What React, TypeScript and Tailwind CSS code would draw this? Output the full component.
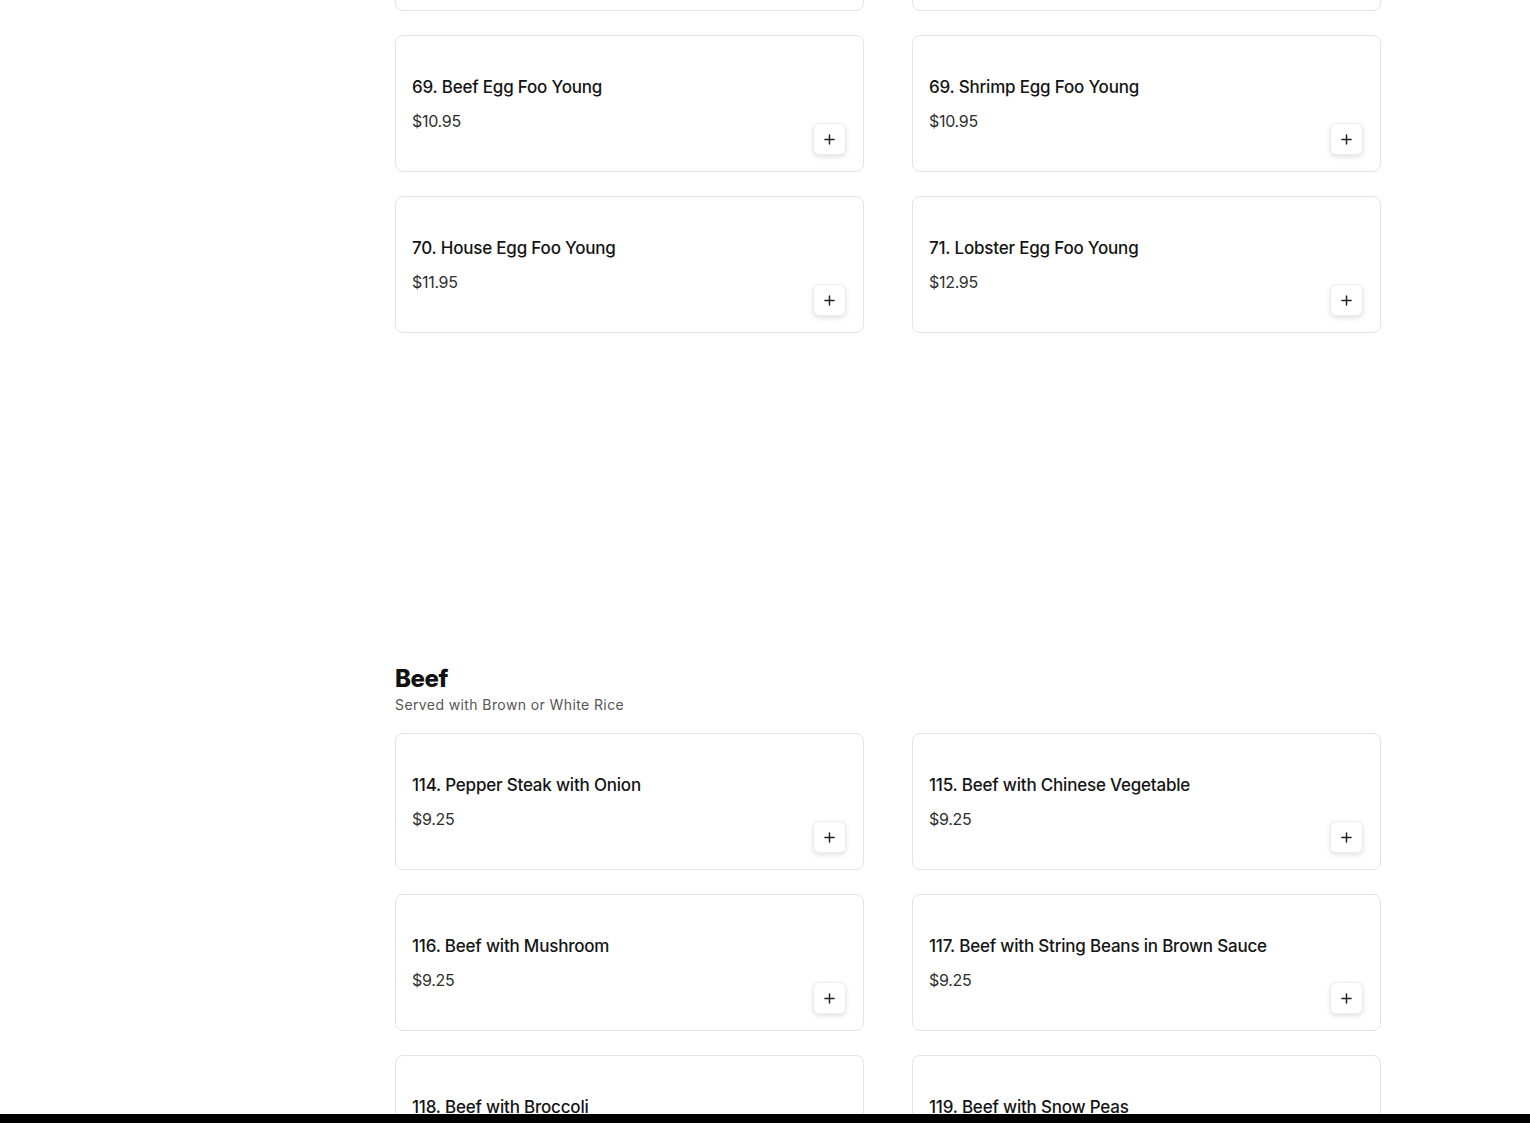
const eggFooYoung = [
  { name: '68. Chicken Egg Foo Young', price: '$10.95' },
  { name: '68. Pork Egg Foo Young', price: '$10.95' },
  { name: '69. Beef Egg Foo Young', price: '$10.95' },
  { name: '69. Shrimp Egg Foo Young', price: '$10.95' },
  { name: '70. House Egg Foo Young', price: '$11.95' },
  { name: '71. Lobster Egg Foo Young', price: '$12.95' },
];

const beef = [
  { name: '114. Pepper Steak with Onion', price: '$9.25' },
  { name: '115. Beef with Chinese Vegetable', price: '$9.25' },
  { name: '116. Beef with Mushroom', price: '$9.25' },
  { name: '117. Beef with String Beans in Brown Sauce', price: '$9.25' },
  { name: '118. Beef with Broccoli', price: '$9.25' },
  { name: '119. Beef with Snow Peas', price: '$9.25' },
];

interface Item {
  name: string;
  price: string;
}

function PlusIcon() {
  return (
    <svg width="11" height="11" viewBox="0 0 12 12" fill="none">
      <path d="M6 1v10M1 6h10" stroke="#1f1f1f" strokeWidth="1.6" strokeLinecap="round" />
    </svg>
  );
}

function ItemCard({ item }: { item: Item }) {
  return (
    <div className="flex h-[137px] justify-between rounded-lg border border-[#e4e4e4] bg-white pr-[17px] pb-4 pl-4">
      <div className="flex flex-col pt-[39px]">
        <div className="text-[17px] leading-6 font-medium tracking-[-0.2px] text-[#141414]">{item.name}</div>
        <div className="mt-2.5 text-[16px] leading-6 tracking-[-0.3px] text-[#2e2e2e]">{item.price}</div>
      </div>
      <button
        type="button"
        aria-label="Add"
        className="flex h-[32px] w-[33px] items-center justify-center self-end rounded-md border border-[#ececec] bg-white shadow-[0_2px_5px_rgba(0,0,0,0.12)]"
      >
        <PlusIcon />
      </button>
    </div>
  );
}

export default function App() {
  return (
    <div
      className="min-h-[1123px] overflow-hidden bg-white"
      style={{ fontFamily: 'Inter, "Noto Sans", sans-serif' }}
    >
      <div className="ml-[395px] w-[986px]">
        <div className="-mt-[126px] grid grid-cols-2 gap-x-12 gap-y-6">
          {eggFooYoung.map((item) => (
            <ItemCard key={item.name} item={item} />
          ))}
        </div>

        <section className="mt-[330px]">
          <h2 className="text-2xl leading-8 font-extrabold tracking-[-0.4px] text-[#111]">Beef</h2>
          <p className="text-sm leading-5 tracking-[0.4px] text-[#555]">Served with Brown or White Rice</p>
          <div className="mt-[18px] grid grid-cols-2 gap-x-12 gap-y-6">
            {beef.map((item) => (
              <ItemCard key={item.name} item={item} />
            ))}
          </div>
        </section>
      </div>
      <div className="fixed right-0 bottom-0 left-0 h-[9px] bg-black" />
    </div>
  );
}
